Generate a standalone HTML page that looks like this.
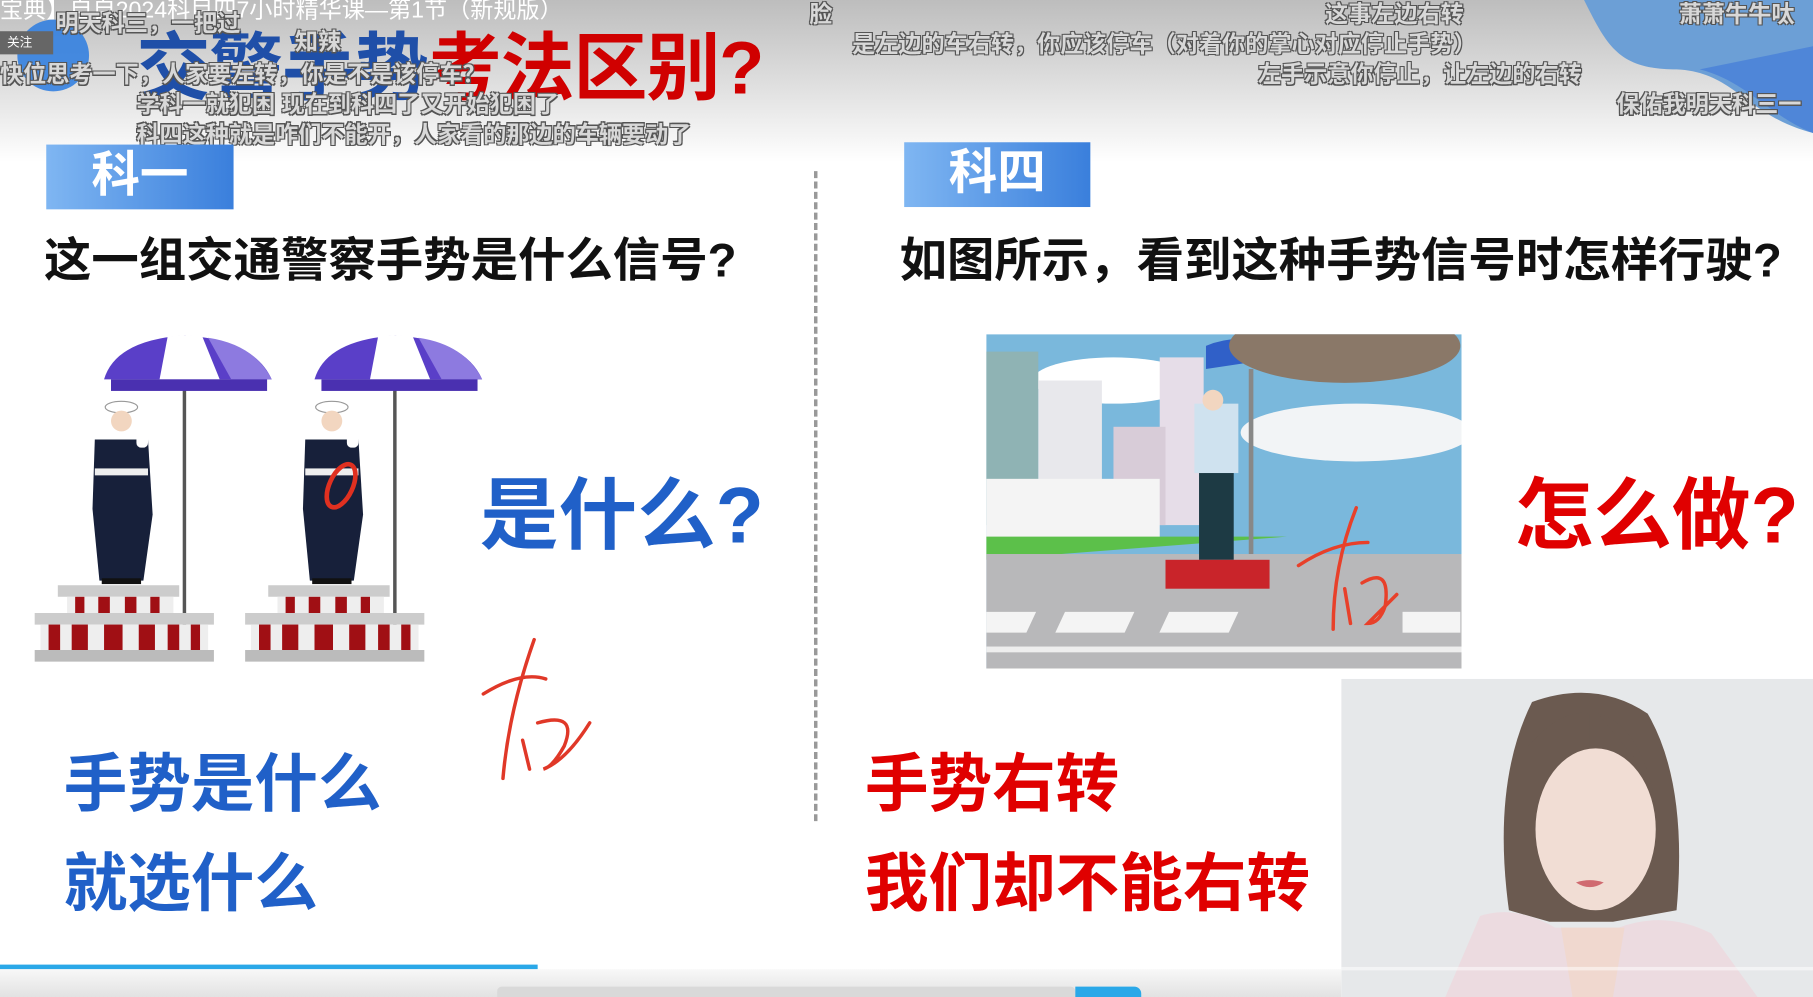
<!DOCTYPE html>
<html><head><meta charset="utf-8">
<style>
html,body{margin:0;padding:0;width:1813px;height:997px;overflow:hidden;background:#fff}
#s{position:absolute;left:0;top:0;width:1568px;height:862px;transform:scale(1.15625,1.1566);transform-origin:0 0;background:#fff;overflow:hidden;font-family:"Liberation Sans","Noto Sans CJK SC",sans-serif}
.a{position:absolute;white-space:nowrap}
.dm{position:absolute;white-space:nowrap;color:#d8d8d8;font-size:20px;font-weight:bold;text-shadow:-1px -1px 0 #555,1px -1px 0 #555,-1px 1px 0 #555,1px 1px 0 #555}
.tab{position:absolute;height:56px;background:linear-gradient(90deg,#7fb6f2,#3a7fdc);color:#fff;font-size:42px;font-weight:bold;line-height:52px;text-align:center}
.q{position:absolute;font-size:41px;font-weight:bold;color:#111;white-space:nowrap}
.big{position:absolute;font-weight:bold;white-space:nowrap}
</style></head><body><div id="s">
<div class="a" style="left:0;top:0;width:1568px;height:140px;background:linear-gradient(#bdbdbd,#e4e4e4 60%,#fff)"></div>
<svg class="a" style="left:1360px;top:0" width="208" height="130"><path d="M10 0 C30 40 40 60 90 60 C140 62 150 100 208 115 L208 0Z" fill="#6c9fd6"/><path d="M110 60 C150 70 170 100 208 115 L208 40Z" fill="#4f86d8"/></svg>
<div class="a" style="left:15px;top:17px;width:62px;height:62px;border-radius:50%;background:#2a7be0;opacity:.85"></div>
<div class="a" style="left:0;top:27px;width:40px;height:20px;background:#666;color:#fff;font-size:11px;line-height:20px;padding-left:6px">关注</div>
<div class="big" style="left:118px;top:8px;font-size:64px;letter-spacing:-1px"><span style="color:#1f4fa8">交警手势</span><span style="color:#d00000">考法区别?</span></div>
<div class="dm" style="left:0;top:-8px;font-weight:normal;color:#fff;text-shadow:none">宝典】自自2024科目四7小时精华课—第1节（新规版）</div>
<div class="dm" style="left:48px;top:4px">明天科三，一把过</div>
<div class="dm" style="left:700px;top:-4px">脸</div>
<div class="dm" style="left:255px;top:20px">知辣</div>
<div class="dm" style="left:0;top:48px">快位思考一下，人家要左转，你是不是该停车？</div>
<div class="dm" style="left:118px;top:74px">学科一就犯困  现在到科四了又开始犯困了</div>
<div class="dm" style="left:118px;top:100px">科四这种就是咋们不能开，人家看的那边的车辆要动了</div>
<div class="dm" style="left:1146px;top:-4px">这事左边右转</div>
<div class="dm" style="left:737px;top:22px">是左边的车右转，你应该停车（对着你的掌心对应停止手势）</div>
<div class="dm" style="left:1088px;top:48px">左手示意你停止，让左边的右转</div>
<div class="dm" style="left:1452px;top:-4px">萧萧牛牛呔</div>
<div class="dm" style="left:1398px;top:74px">保佑我明天科三一</div>

<div class="tab" style="left:40px;top:125px;width:162px">科一</div>
<div class="tab" style="left:782px;top:123px;width:161px">科四</div>
<div class="q" style="left:38px;top:191px">这一组交通警察手势是什么信号?</div>
<div class="q" style="left:778px;top:191px">如图所示，看到这种手势信号时怎样行驶?</div>
<div class="a" style="left:704px;top:148px;height:562px;border-left:3px dashed #999"></div>

<svg class="a" style="left:20px;top:280px" width="420" height="300">
<defs><g id="p">
<rect x="138" y="50" width="3" height="230" fill="#555"/>
<path d="M70 48 Q80 14 140 10 Q200 14 215 48Z" fill="#5a3fc8"/>
<path d="M125 11 Q140 9 155 11 L170 48 L118 48Z" fill="#fff"/>
<path d="M160 12 Q200 18 215 48 L180 48Z" fill="#8d7ae0"/>
<rect x="76" y="48" width="135" height="10" fill="#4a30b0"/>
<ellipse cx="85" cy="72" rx="14" ry="5" fill="#fff" stroke="#999"/>
<circle cx="85" cy="84" r="9" fill="#f2d6c0"/>
<path d="M62 100 L108 100 L112 165 L104 222 L66 222 L60 160Z" fill="#17203a"/>
<rect x="62" y="125" width="46" height="6" fill="#eee"/>
<rect x="98" y="85" width="10" height="22" rx="4" fill="#fff"/>
<rect x="68" y="220" width="34" height="5" fill="#111"/>
<path d="M30 226 L135 226 L135 236 L30 236Z" fill="#ccc"/>
<path d="M38 236 L130 236 L130 250 L38 250Z" fill="#eee"/>
<g fill="#a00f14"><rect x="45" y="236" width="8" height="14"/><rect x="65" y="236" width="10" height="14"/><rect x="88" y="236" width="10" height="14"/><rect x="110" y="236" width="8" height="14"/></g>
<path d="M10 250 L165 250 L165 260 L10 260Z" fill="#ccc"/>
<path d="M15 260 L160 260 L160 282 L15 282Z" fill="#eee"/>
<g fill="#a00f14"><rect x="22" y="260" width="10" height="22"/><rect x="42" y="260" width="14" height="22"/><rect x="70" y="260" width="16" height="22"/><rect x="100" y="260" width="14" height="22"/><rect x="125" y="260" width="10" height="22"/><rect x="145" y="260" width="8" height="22"/></g>
<path d="M10 282 L165 282 L165 292 L10 292Z" fill="#bbb"/>
</g></defs>
<use href="#p"/><use href="#p" x="182"/>
<ellipse cx="275" cy="140" rx="10" ry="20" fill="none" stroke="#e03020" stroke-width="4" transform="rotate(25 275 140)"/>
</svg>

<div class="big" style="left:415px;top:390px;font-size:68px;color:#2060c8">是什么?</div>
<div class="big" style="left:1310px;top:390px;font-size:68px;color:#e00000">怎么做?</div>
<div class="big" style="left:55px;top:633px;font-size:55px;color:#2060c8">手势是什么</div>
<div class="big" style="left:55px;top:719px;font-size:55px;color:#2060c8">就选什么</div>
<div class="big" style="left:748px;top:633px;font-size:55px;color:#e00000">手势右转</div>
<div class="big" style="left:748px;top:719px;font-size:55px;color:#e00000">我们却不能右转</div>
<svg class="a" style="left:410px;top:545px" width="110" height="135"><path d="M8 55 Q40 35 62 42 M52 8 Q30 70 25 128 M42 95 L48 120 M55 80 Q90 70 78 100 Q68 118 60 120 Q80 112 100 80" fill="none" stroke="#e03828" stroke-width="3" stroke-linecap="round"/></svg>

<svg class="a" style="left:853px;top:289px" width="411" height="289">
<rect width="411" height="289" fill="#7ab8dc"/>
<ellipse cx="110" cy="40" rx="70" ry="20" fill="#fff"/>
<ellipse cx="320" cy="85" rx="100" ry="25" fill="#f2f4f6"/>
<rect x="0" y="15" width="45" height="150" fill="#8fb3b4"/>
<rect x="45" y="40" width="55" height="125" fill="#e8e8ec"/>
<rect x="150" y="20" width="38" height="145" fill="#e6dde8"/>
<rect x="110" y="80" width="45" height="85" fill="#d8ccd8"/>
<rect x="0" y="125" width="150" height="55" fill="#f4f4f4"/>
<path d="M0 175 L260 175 L0 195Z" fill="#5cc04a"/>
<rect x="0" y="190" width="411" height="99" fill="#b8b8ba"/>
<g fill="#f4f4f4"><rect x="10" y="240" width="60" height="18" transform="skewX(-25)"/><rect x="95" y="240" width="60" height="18" transform="skewX(-25)"/><rect x="180" y="240" width="60" height="18" transform="skewX(-25)"/><rect x="270" y="240" width="60" height="18" transform="skewX(-25)"/><rect x="360" y="240" width="50" height="18"/></g>
<rect x="0" y="270" width="411" height="5" fill="#eee"/>
<path d="M190 10 Q225 -5 270 18 L190 30Z" fill="#3060c8"/>
<ellipse cx="310" cy="10" rx="100" ry="32" fill="#8a7868"/>
<rect x="227" y="30" width="4" height="160" fill="#888"/>
<rect x="180" y="60" width="38" height="60" fill="#cfe2ef"/>
<rect x="184" y="120" width="30" height="75" fill="#1d3a44"/>
<circle cx="196" cy="57" r="9" fill="#f2d6c0"/>
<rect x="155" y="195" width="90" height="25" fill="#c9242a"/>
<path d="M270 200 Q300 180 330 180 M320 150 Q300 200 300 255 M310 220 L315 250 M325 215 Q350 200 345 235 Q340 250 330 250 L355 225" fill="none" stroke="#e8402a" stroke-width="3" stroke-linecap="round"/>
</svg>

<svg class="a" style="left:1160px;top:587px" width="408" height="275">
<rect width="408" height="275" fill="#e6e8ea"/>
<path d="M165 20 Q220 0 265 30 Q300 90 290 200 L235 210 L180 210 L145 200 Q130 90 165 20Z" fill="#6b5a50"/>
<ellipse cx="220" cy="130" rx="52" ry="70" fill="#f1ddd4"/>
<path d="M160 60 Q190 25 215 30 L215 60Z" fill="#6b5a50"/>
<path d="M222 30 Q260 40 272 110 L255 70Z" fill="#6b5a50"/>
<path d="M90 275 L120 205 Q150 195 185 215 L240 215 Q280 200 320 220 L360 275Z" fill="#ecdbe0"/>
<path d="M190 215 L245 215 L235 275 L200 275Z" fill="#f0d8cf"/>
<path d="M203 176 Q215 172 227 176 Q215 184 203 176Z" fill="#d06a70"/>
</svg>

<div class="a" style="left:0;top:834px;width:465px;height:4px;background:#2aa8e8"></div>
<div class="a" style="left:0;top:838px;width:1160px;height:24px;background:linear-gradient(#f8f8f8,#e2e2e2)"></div>
<div class="a" style="left:430px;top:853px;width:500px;height:9px;background:#d9d9d9;border-radius:4px 4px 0 0"></div>
<div class="a" style="left:930px;top:853px;width:57px;height:9px;background:#2aa8e8;border-radius:0 6px 0 0"></div>
<div class="a" style="left:1160px;top:836px;width:408px;height:3px;background:rgba(255,255,255,.5)"></div>
</div></body></html>
